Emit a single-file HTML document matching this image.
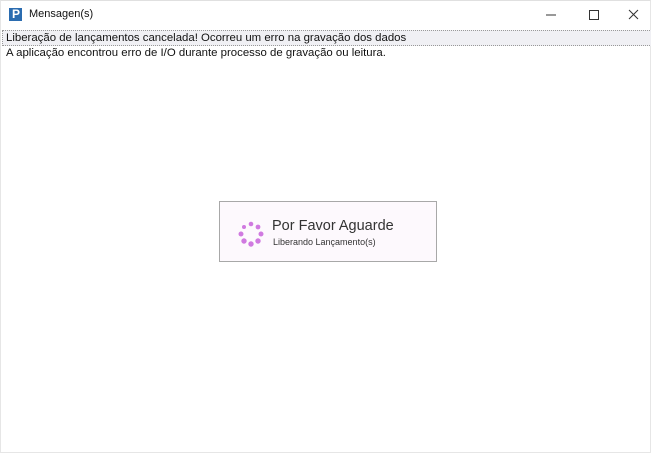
<!DOCTYPE html>
<html><head><meta charset="utf-8"><style>
html,body{margin:0;padding:0;width:651px;height:453px;background:#fff;overflow:hidden;font-family:"Liberation Sans",sans-serif;}
.win{position:absolute;left:0;top:0;width:649px;height:451px;border:1px solid #e6e6e6;border-top:1px solid #e0e0e0;}
.title{position:absolute;left:0;top:0;width:649px;height:28px;}
.logo{position:absolute;left:8px;top:7px;width:13px;height:13px;background:#2b6cb0;}
.ttext{position:absolute;left:28px;top:7px;font-size:11px;color:#111;}
.l1{position:absolute;left:1px;top:29px;width:645px;height:14px;background:#f0f0f4;border:1px dotted #999;font-size:11.4px;line-height:14px;padding-left:3px;color:#111;}
.l2{position:absolute;left:5px;top:45px;font-size:11.4px;line-height:14px;color:#111;}
.box{position:absolute;left:218px;top:200px;width:216px;height:59px;border:1px solid #a8a8a8;background:#fdf9fd;}
.h{position:absolute;left:52px;top:16px;font-size:14.5px;color:#333;}
.s{position:absolute;left:53px;top:35px;font-size:9px;color:#333;}
</style></head><body>
<div class="win">
<div class="title">
<div class="logo"><span style="position:absolute;left:3px;top:-1px;color:#fff;font-weight:bold;font-size:12px;">P</span></div>
<div class="ttext">Mensagen(s)</div>
<svg style="position:absolute;left:540px;top:6px" width="105" height="16">
<line x1="5" y1="8" x2="15" y2="8" stroke="#333" stroke-width="1"/>
<rect x="48.5" y="3.5" width="9" height="9" fill="none" stroke="#333"/>
<path d="M88 3L97 12M97 3L88 12" stroke="#333" stroke-width="1"/>
</svg>
</div>
<div class="l1">Liberação de lançamentos cancelada! Ocorreu um erro na gravação dos dados</div>
<div class="l2">A aplicação encontrou erro de I/O durante processo de gravação ou leitura.</div>
<div class="box">
<svg style="position:absolute;left:18px;top:19px" width="26" height="26">
<g fill="#d07ae0">
<circle cx="13" cy="3" r="2.3"/><circle cx="20" cy="6" r="2.4"/><circle cx="23" cy="13" r="2.5"/><circle cx="20" cy="20" r="2.7"/><circle cx="13" cy="23" r="2.7"/><circle cx="6" cy="20" r="2.7"/><circle cx="3" cy="13" r="2.5"/><circle cx="6" cy="6" r="2"/>
</g></svg>
<div class="h">Por Favor Aguarde</div>
<div class="s">Liberando Lançamento(s)</div>
</div>
</div>
</body></html>
